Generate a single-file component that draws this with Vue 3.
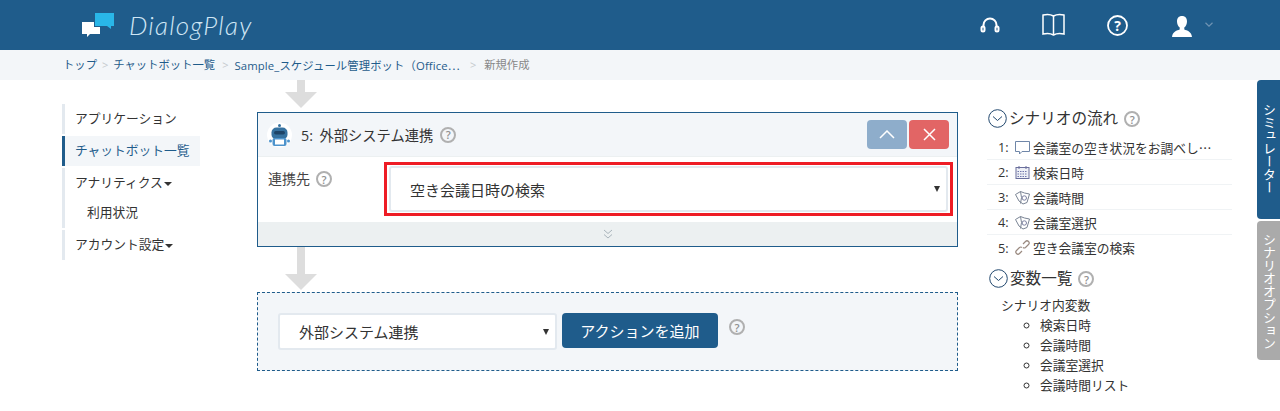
<script setup>
const flow = [
  { n: 1, icon: 'bubble', text: '会議室の空き状況をお調べし…' },
  { n: 2, icon: 'cal', text: '検索日時' },
  { n: 3, icon: 'cards', text: '会議時間' },
  { n: 4, icon: 'cards', text: '会議室選択' },
  { n: 5, icon: 'chain', text: '空き会議室の検索' },
]
const vars = ['検索日時', '会議時間', '会議室選択', '会議時間リスト']
</script>

<template>
  <div class="page">
    <header class="topbar">
      <div class="brand">
        <svg class="logo" width="34" height="26" viewBox="0 0 34 26">
          <path d="M14 1h19v13h-3v3l-4-3H14z" fill="#29b6e8" />
          <path d="M1 10h12v5h6v7H9l-3 3v-3H1z" fill="#fff" />
        </svg>
        <span class="brand-name">DialogPlay</span>
      </div>
      <nav class="top-icons">
        <svg class="i-head" width="20" height="16" viewBox="0 0 20 16" fill="none" stroke="#fff" stroke-width="2">
          <path d="M3.500 10V8a6.500 6.500 0 0 1 13 0v2" />
          <rect x="1.500" y="9.500" width="3" height="5" rx="1.500" />
          <rect x="15.500" y="9.500" width="3" height="5" rx="1.500" />
        </svg>
        <svg class="i-book" width="23" height="23" viewBox="0 0 23 23" fill="none" stroke="#fff" stroke-width="1.500">
          <path d="M1 2c4-1 7.500-.8 10.500 1 3-1.800 6.500-2 10.500-1v19c-4-1-7.500-.8-10.500 1-3-1.800-6.500-2-10.500-1z" />
          <path d="M11.500 3v19" />
        </svg>
        <svg class="i-help" width="21" height="21" viewBox="0 0 21 21">
          <circle cx="10.500" cy="10.500" r="9.500" fill="none" stroke="#fff" stroke-width="1.800" />
          <text x="10.500" y="15.500" text-anchor="middle" font-size="14" font-weight="700" fill="#fff" font-family="Open Sans, sans-serif">?</text>
        </svg>
        <svg class="i-user" width="20" height="21" viewBox="0 0 20 21">
          <path d="M10 0c3.300 0 5 2.200 5 5.500 0 2.600-1.100 4.800-2.700 6v2c2.700 1.100 7 1.800 7.700 7.500H0c.7-5.700 5-6.400 7.700-7.500v-2C6.100 10.300 5 8.100 5 5.500 5 2.200 6.700 0 10 0z" fill="#fff" />
        </svg>
        <svg class="i-chev" width="8" height="5" viewBox="0 0 8 5" fill="none" stroke="#6f93b3" stroke-width="1.200">
          <path d="M.5.800l3.500 3.400L7.500.8" />
        </svg>
      </nav>
    </header>

    <div class="crumbs">
      <span class="c-link">トップ</span><span class="c-sep">&gt;</span>
      <span class="c-link">チャットボット一覧</span><span class="c-sep c-sep-mid">&gt;</span>
      <span class="c-link c-long">Sample_スケジュール管理ボット（Office<span class="cjk">…</span></span><span class="c-sep c-sep-far">&gt;</span>
      <span class="c-cur">新規作成</span>
    </div>

    <main class="content">
      <aside class="side">
        <div class="side-group"><div class="side-item">アプリケーション</div></div>
        <div class="side-group active"><div class="side-item">チャットボット一覧</div></div>
        <div class="side-group">
          <div class="side-item">アナリティクス<i class="caret"></i></div>
          <div class="side-item sub">利用状況</div>
        </div>
        <div class="side-group"><div class="side-item">アカウント設定<i class="caret"></i></div></div>
      </aside>

      <section class="center">
        <div class="arrow short"><i class="shaft"></i><i class="head"></i></div>

        <div class="card">
          <div class="card-head">
            <svg class="robot" width="25" height="26" viewBox="0 0 25 26">
              <circle cx="12.500" cy="13" r="12.500" fill="#fff" />
              <circle cx="12.500" cy="3.500" r="1.500" fill="#35719f" />
              <rect x="4.500" y="5.500" width="16" height="12" rx="5" fill="#35719f" />
              <rect x="7" y="9" width="11" height="3.500" rx="1.700" fill="#1d4468" />
              <rect x="5.500" y="16" width="14" height="8" rx="2" fill="#4d93cc" />
              <rect x="8" y="17.500" width="9" height="5" fill="#fff" />
              <rect x="2" y="17.500" width="3" height="3" rx="1.500" fill="#4d93cc" />
              <rect x="20" y="17.500" width="3" height="3" rx="1.500" fill="#4d93cc" />
            </svg>
            <span class="card-title">5: 外部システム連携</span>
            <span class="help title-help">?</span>
            <div class="card-btns">
              <button class="btn-up">
                <svg width="16" height="9" viewBox="0 0 16 9" fill="none" stroke="#fff" stroke-width="1.500"><path d="M1 8l7-7 7 7" /></svg>
              </button>
              <button class="btn-close">
                <svg width="13" height="13" viewBox="0 0 13 13" fill="none" stroke="#fff" stroke-width="1.500"><path d="M1 1l11 11M12 1L1 12" /></svg>
              </button>
            </div>
          </div>
          <div class="card-body">
            <div class="field-label"><span>連携先</span><span class="help">?</span></div>
            <div class="red-box">
              <div class="select big">
                <span>空き会議日時の検索</span><i class="tri"></i>
              </div>
            </div>
          </div>
          <div class="card-foot">
            <svg width="10" height="10" viewBox="0 0 10 10" fill="none" stroke="#a9b4bb" stroke-width="1"><path d="M1 1l4 3.500L9 1M1 5.500L5 9l4-3.500" /></svg>
          </div>
        </div>

        <div class="arrow long"><i class="shaft"></i><i class="head"></i></div>

        <div class="add-panel">
          <div class="select add">
            <span>外部システム連携</span><i class="tri"></i>
          </div>
          <button class="add-btn">アクションを追加</button>
          <span class="help add-help">?</span>
        </div>
      </section>

      <aside class="right">
        <h3 class="r-head">
          <svg class="toggle" width="19" height="19" viewBox="0 0 19 19" fill="none" stroke="#22486e" stroke-width="1">
            <circle cx="9.500" cy="9.500" r="8.800" /><path d="M5 7.500l4.500 4 4.500-4" />
          </svg>
          <span>シナリオの流れ</span><span class="help">?</span>
        </h3>
        <ul class="flow">
          <li v-for="f in flow" :key="f.n" class="flow-row">
            <span class="flow-n">{{ f.n }}:</span>
            <svg class="flow-icon" width="15" height="15" viewBox="0 0 15 15" fill="none" stroke-width="1">
              <template v-if="f.icon === 'bubble'">
                <path d="M.5 1.500h14v10H7l-2.500 2.500v-2.500H.5z" stroke="#6f86a8" />
              </template>
              <template v-else-if="f.icon === 'cal'">
                <rect x="1" y="2.500" width="13" height="11" fill="#eef0f6" stroke="#6a6f9c" />
                <path d="M2.500 6.500h10M2.500 9h10M2.500 11.500h10" stroke="#6f76ac" stroke-width="1.200" stroke-dasharray="1.500 1" />
                <path d="M4 1v3M11 1v3" stroke="#6a6f9c" />
              </template>
              <template v-else-if="f.icon === 'cards'">
                <path d="M.5 4.500L5.500 1.500l4 1.500 5 1-2.500 8.500-4 1.500-4-3z" stroke="#7a8494" />
                <path d="M5.500 1.500l1 6-1 6" stroke="#7a8494" />
                <circle cx="9.300" cy="8" r="2.200" stroke="#7a7fa0" />
              </template>
              <template v-else>
                <path d="M8 4l2.500-2.500a2 2 0 0 1 3 3L10.500 7.500a2 2 0 0 1-2.500 0" stroke="#9a8a80" stroke-width="1.200" />
                <path d="M7 11l-2.500 2.500a2 2 0 0 1-3-3L4.500 7.500a2 2 0 0 1 2.500 0" stroke="#9a8a80" stroke-width="1.200" />
              </template>
            </svg>
            <span class="flow-t">{{ f.text }}</span>
          </li>
        </ul>
        <h3 class="r-head vars-head">
          <svg class="toggle" width="19" height="19" viewBox="0 0 19 19" fill="none" stroke="#22486e" stroke-width="1">
            <circle cx="9.500" cy="9.500" r="8.800" /><path d="M5 7.500l4.500 4 4.500-4" />
          </svg>
          <span>変数一覧</span><span class="help">?</span>
        </h3>
        <div class="vars-title">シナリオ内変数</div>
        <ul class="vars">
          <li v-for="v in vars" :key="v">{{ v }}</li>
        </ul>
      </aside>
    </main>

    <div class="tabs">
      <div class="tab sim">シミュレーター</div>
      <div class="tab opt">シナリオオプション</div>
    </div>
  </div>
</template>

<style>
html, body { margin: 0; overflow: hidden; background: #fff; }
</style>

<style scoped>
.page {
  position: relative;
  height: 411px;
  overflow: hidden;
  background: #fff;
  color: #333;
  font-family: "Open Sans", "Noto Sans CJK JP", sans-serif;
  font-size: 12.75px;
}
.cjk { font-family: "Noto Sans CJK JP", sans-serif; }
.topbar {
  height: 50px;
  background: #1f5c8b;
  display: flex;
  align-items: center;
}
.brand { display: flex; align-items: center; margin-left: 81px; }
.logo { margin-top: -1px; }
.brand-name {
  margin-left: 14px;
  font-family: Lato, sans-serif;
  font-style: italic;
  font-weight: 300;
  font-size: 26px;
  letter-spacing: 1.200px;
  color: #cfe6f5;
}
.top-icons {
  margin-left: auto;
  padding-right: 67px;
  display: flex;
  align-items: center;
}
.i-book { margin-left: 42px; margin-top: -1px; }
.i-help { margin-left: 42px; }
.i-user { margin-left: 44px; margin-top: 3px; }
.i-chev { margin-left: 13px; margin-top: -1px; }
.crumbs {
  height: 30px;
  background: #f3f6f9;
  box-sizing: border-box;
  padding-left: 63px;
  display: flex;
  align-items: center;
  font-size: 11.33px;
  line-height: 30px;
  white-space: nowrap;
}
.c-link { color: #1f5c8b; }
.c-long { letter-spacing: .12px; }
.c-sep { color: #c4c9cd; margin: 0 5px; font-size: 11px; }
.c-sep-mid { margin: 0 6px 0 7px; }
.c-sep-far { margin: 0 8px 0 10px; }
.c-cur { color: #888; }
.content { display: flex; align-items: flex-start; }
.side {
  width: 138px;
  margin: 24px 0 0 62px;
  display: flex;
  flex-direction: column;
  gap: 2px;
}
.side-group { border-left: 3px solid #e3e9ef; }
.side-group.active { border-left-color: #1f5c8b; background: #f3f6f9; }
.side-group.active .side-item { color: #1f5c8b; }
.side-item {
  height: 30px;
  line-height: 29px;
  padding-left: 10px;
  font-size: 12.75px;
  color: #333;
  white-space: nowrap;
}
.side-item.sub { padding-left: 22px; }
.caret {
  display: inline-block;
  border: 4px solid transparent;
  border-top-color: #333;
  border-bottom-width: 0;
  vertical-align: middle;
  margin-left: 1px;
}
.center { width: 701px; margin-left: 57px; }
.arrow { display: flex; flex-direction: column; align-items: center; width: 88px; }
.arrow .shaft { width: 8px; background: #ddd; }
.arrow .head {
  width: 0; height: 0;
  border-left: 16px solid transparent;
  border-right: 16px solid transparent;
  border-top: 16px solid #ddd;
}
.arrow.short { height: 32px; }
.arrow.short .shaft { height: 12px; }
.arrow.long { height: 45px; }
.arrow.long .shaft { height: 27px; }
.card { border: 1px solid #1f5c8b; box-sizing: border-box; height: 135px; display: flex; flex-direction: column; }
.card-head {
  height: 44px;
  flex: none;
  background: #f3f6f9;
  border-bottom: 1px solid #ecf0f1;
  box-sizing: border-box;
  display: flex;
  align-items: center;
  padding: 0 8px 0 9px;
}
.robot { flex: none; }
.card-title { margin-left: 9px; font-size: 14.25px; word-spacing: 3px; }
.help {
  display: inline-flex;
  align-items: center;
  justify-content: center;
  width: 16px;
  height: 16px;
  box-sizing: border-box;
  border: 2px solid #b0b0b0;
  border-radius: 50%;
  color: #909090;
  font-size: 11px;
  font-weight: 600;
  line-height: 1;
  margin-left: 6px;
  flex: none;
}
.title-help { margin-left: 7px; }
.card-btns { margin-left: auto; display: flex; gap: 2px; }
.card-btns button {
  width: 40px;
  height: 29px;
  padding: 0;
  border: 0;
  border-radius: 4px;
  display: flex;
  align-items: center;
  justify-content: center;
}
.btn-up { background: #8eadcb; }
.btn-close { background: #e26565; }
.card-body { flex: 1; display: flex; padding: 5px 4px 0 10px; background: #fff; }
.field-label {
  width: 116px;
  display: flex;
  align-items: flex-start;
  font-size: 14px;
  line-height: 20px;
  padding-top: 7px;
  color: #444;
}
.field-label .help { margin-top: 2px; }
.red-box {
  flex: 1;
  height: 54px;
  box-sizing: border-box;
  border: 3px solid #ee1c25;
  padding: 1px 2px;
}
.select {
  display: flex;
  align-items: center;
  box-sizing: border-box;
  background: #fff;
  border: 2px solid #e3e9ef;
  border-radius: 3px;
  font-size: 15px;
  color: #333;
}
.select.big { height: 46px; padding-left: 19px; }
.select .tri {
  margin-left: auto;
  margin-right: 6px;
  border: 3px solid transparent;
  border-top: 6px solid #333;
  border-bottom-width: 0;
}
.card-foot {
  height: 24px;
  flex: none;
  background: #ecf0f1;
  display: flex;
  align-items: center;
  justify-content: center;
}
.add-panel {
  height: 79px;
  box-sizing: border-box;
  border: 1px dashed #1f5c8b;
  background: #f3f6f9;
  display: flex;
  align-items: flex-start;
  padding: 20px 0 0 20px;
}
.select.add { width: 279px; height: 37px; padding-left: 19px; }
.add-btn {
  margin-left: 5px;
  width: 156px;
  height: 35px;
  border: 0;
  border-radius: 4px;
  background: #1f5c8b;
  color: #fff;
  font: inherit;
  font-size: 15px;
  padding: 0;
}
.add-help { margin: 6px 0 0 11px; }
.right { width: 245px; margin-left: 29px; padding-top: 25px; }
.r-head {
  margin: 0;
  display: flex;
  align-items: center;
  font-size: 15.6px;
  font-weight: 400;
  height: 26px;
  line-height: 26px;
}
.r-head .help { margin-left: 6px; margin-top: 2px; }
.toggle { margin-left: 1px; margin-right: 2px; flex: none; }
.flow { list-style: none; margin: 4px 0 0; padding: 0; }
.flow-row {
  height: 25px;
  box-sizing: border-box;
  border-bottom: 1px solid #f0f3f5;
  display: flex;
  align-items: center;
  font-size: 12.75px;
  padding-left: 11px;
  white-space: nowrap;
}
.flow-row:last-child { border-bottom: 0; }
.flow-n { width: 17px; }
.flow-icon { flex: none; margin-right: 3px; }
.flow-t { font-family: "Noto Sans CJK JP", sans-serif; }
.vars-head { margin-top: 5px; }
.vars-head .toggle { margin-left: 2px; margin-right: 2px; }
.vars-title { margin: 4px 0 0 14px; line-height: 20px; font-size: 12.75px; }
.vars {
  margin: 0;
  padding: 0 0 0 53px;
  list-style: circle;
  font-size: 12.75px;
  line-height: 20px;
}
.tabs {
  position: absolute;
  right: 0;
  top: 80px;
  display: flex;
  flex-direction: column;
  gap: 2px;
}
.tab {
  width: 23px;
  height: 139px;
  box-sizing: border-box;
  border-radius: 4px 0 0 4px;
  writing-mode: vertical-rl;
  font-size: 13px;
  line-height: 23px;
  color: #fff;
  padding-top: 23px;
  text-align: left;
}
.tab.sim { background: #1f5c8b; }
.tab.opt { background: #aaa; padding-top: 12px; }
</style>
